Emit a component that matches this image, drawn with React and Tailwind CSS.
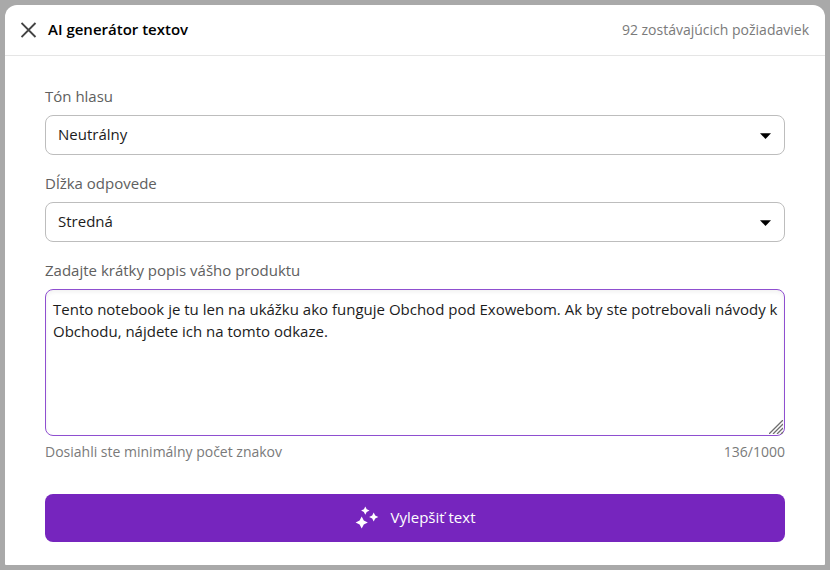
import { useState } from 'react';

const SelectField = ({ id, label, value, options, onChange }) => (
  <div>
    <label htmlFor={id} className="block mb-[9px] text-[15px] leading-5 text-[#606060]">{label}</label>
    <div className="relative">
      <select
        id={id}
        className="block w-full h-10 px-3 pb-0.5 appearance-none rounded-lg border border-[#bdbdbd] bg-white text-[15px] text-[#1c1c1c] outline-none"
        value={value}
        onChange={(e) => onChange(e.target.value)}
      >
        {options.map((option) => (
          <option key={option} value={option}>{option}</option>
        ))}
      </select>
      <svg className="absolute right-3.5 top-1/2 -translate-y-1/2 mt-px pointer-events-none" width="11" height="6" viewBox="0 0 11 6" fill="#000000" aria-hidden="true">
        <path d="M0 0.3h11L5.5 6z" />
      </svg>
    </div>
  </div>
);

const SparklesIcon = () => (
  <svg width="24" height="24" viewBox="0 0 24 24" fill="currentColor" aria-hidden="true">
    <path d="M10.3 0.4l1.4 2.8 2.8 1.4-2.8 1.4-1.4 2.8-1.4-2.8-2.8-1.4 2.8-1.4z" />
    <path d="M18.7 6.4l1.5 3.1 3.1 1.5-3.1 1.5-1.5 3.1-1.5-3.1-3.1-1.5 3.1-1.5z" />
    <path d="M6.7 10.4l2.1 4 4 2.1-4 2.1-2.1 4-2.1-4-4-2.1 4-2.1z" />
  </svg>
);

const App = () => {
  const [tone, setTone] = useState('Neutrálny');
  const [length, setLength] = useState('Stredná');
  const [text, setText] = useState(
    'Tento notebook je tu len na ukážku ako funguje Obchod pod Exowebom. Ak by ste potrebovali návody k Obchodu, nájdete ich na tomto odkaze.'
  );

  return (
    <div className="min-h-screen bg-[#a9a9a9] p-[5px] font-['Open_Sans',sans-serif]">
      <main className="rounded-t-xl rounded-b-[1px] bg-white">
        <header className="flex items-center justify-between h-[51px] px-4 border-b border-[#e5e5e5]">
          <div className="flex items-center gap-[11px]">
            <button type="button" aria-label="Zavrieť" className="text-[#444444]">
              <svg width="16" height="16" viewBox="0 0 16 16" fill="none" stroke="currentColor" strokeWidth="1.9" aria-hidden="true">
                <path d="M0.5 1l14 14M14.5 1L0.5 15" />
              </svg>
            </button>
            <h1 className="text-[15px] leading-5 pb-0.5 font-semibold text-black">AI generátor textov</h1>
          </div>
          <span className="text-sm text-[#7a7a7a]">92 zostávajúcich požiadaviek</span>
        </header>

        <form className="flex flex-col gap-[18px] px-10 pt-[30px] pb-[23px]" onSubmit={(e) => e.preventDefault()}>
          <SelectField id="tone" label="Tón hlasu" value={tone} options={['Neutrálny', 'Priateľský', 'Formálny']} onChange={setTone} />
          <SelectField id="length" label="Dĺžka odpovede" value={length} options={['Krátka', 'Stredná', 'Dlhá']} onChange={setLength} />

          <div>
            <label htmlFor="description" className="block mb-[9px] text-[15px] leading-5 text-[#606060]">Zadajte krátky popis vášho produktu</label>
            <div className="relative">
              <textarea
                id="description"
                maxLength={1000}
                className="block w-full h-[147px] pl-[7px] pr-1 py-2 resize-y rounded-lg border border-[#8f4fd0] bg-white text-[15px] leading-[22px] text-[#1c1c1c] shadow-[inset_0_2px_4px_rgba(0,0,0,0.06)] outline-none [&::-webkit-resizer]:appearance-none"
                value={text}
                onChange={(e) => setText(e.target.value)}
              />
              <svg className="absolute right-0.5 bottom-0.5 pointer-events-none" width="14" height="14" viewBox="0 0 14 14" fill="none" stroke="#6e6e6e" strokeWidth="1.3" aria-hidden="true">
                <path d="M0 14L14 0M4 14L14 4M8 14L14 8M12 14L14 12" />
              </svg>
            </div>
            <div className="flex justify-between mt-1.5 text-sm leading-5 text-[#7a7a7a]">
              <span>Dosiahli ste minimálny počet znakov</span>
              <span>{text.length}/1000</span>
            </div>
          </div>

          <button type="submit" className="flex items-center justify-center gap-3 h-12 mt-3.5 rounded-lg bg-[#7625be] text-[15px] text-white">
            <SparklesIcon />
            <span className="pb-0.5">Vylepšiť text</span>
          </button>
        </form>
      </main>
    </div>
  );
};

export default App;
